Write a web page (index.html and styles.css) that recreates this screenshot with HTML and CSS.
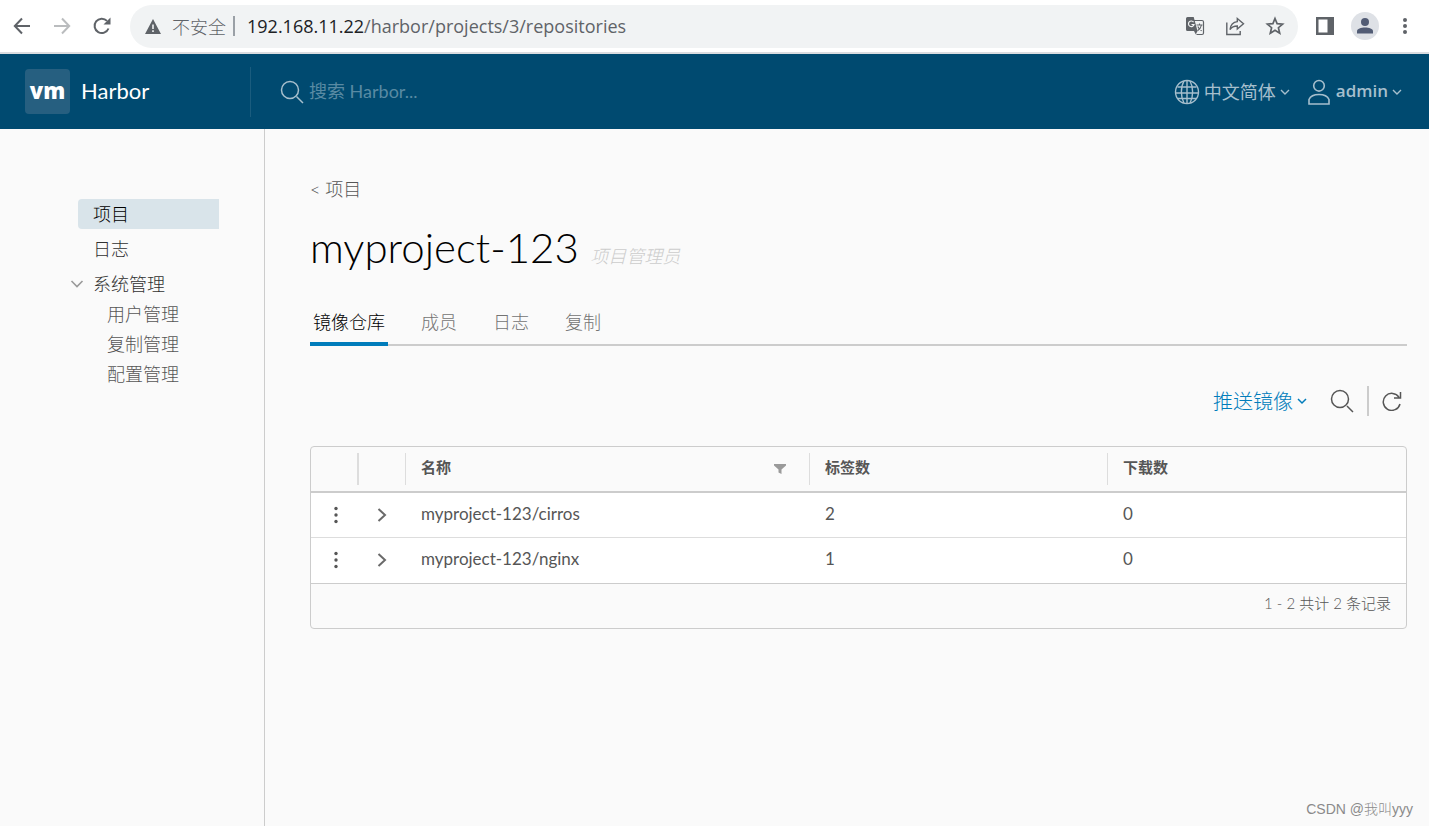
FILE: index.html
```html
<!DOCTYPE html>
<html lang="zh-CN">
<head>
<meta charset="utf-8">
<title>Harbor</title>
<link rel="stylesheet" href="styles.css">
</head>
<body>
<div class="browser-bar">
  <div class="nav-buttons">
    <button class="icon-btn" aria-label="后退"><svg width="20" height="20" viewBox="0 0 20 20" fill="none" stroke="#5f6368" stroke-width="2"><path d="M18 10H3M10 2.500L2.800 10l7.200 7.500"/></svg></button>
    <button class="icon-btn" aria-label="前进"><svg width="20" height="20" viewBox="0 0 20 20" fill="none" stroke="#babcbe" stroke-width="2"><path d="M2 10h15M10 2.500l7.200 7.500-7.200 7.500"/></svg></button>
    <button class="icon-btn" aria-label="重新加载"><svg width="20" height="20" viewBox="0 0 20 20"><path d="M16.500 12.500a7.200 7.200 0 1 1-1.500-7.600" fill="none" stroke="#5f6368" stroke-width="2"/><path d="M18.500 1.500v7h-7z" fill="#5f6368"/></svg></button>
  </div>
  <div class="address">
    <svg width="16" height="15" viewBox="0 0 16 15"><path d="M8 0l8 15H0z" fill="#5f6368"/><path d="M8 5.500v4.500M8 11.300v1.700" stroke="#f1f3f4" stroke-width="1.600"/></svg>
    <span class="insecure">不安全</span>
    <span class="address-sep"></span>
    <span class="url"><span class="url-host">192.168.11.22</span>/harbor/projects/3/repositories</span>
    <div class="address-actions">
      <button class="icon-btn" aria-label="翻译"><svg width="20" height="20" viewBox="0 0 20 20"><path d="M8.500 4.500H17a1.500 1.500 0 0 1 1.500 1.500v11a1.500 1.500 0 0 1-1.500 1.500h-5.500" fill="none" stroke="#5f6368" stroke-width="1.200"/><path d="M2.500 1h6.200l3.800 14H2.500A1.500 1.500 0 0 1 1 13.500v-11A1.500 1.500 0 0 1 2.500 1z" fill="#5f6368"/><path d="M9 15h3.500L10.800 18.500z" fill="#5f6368"/><path d="M8.600 6.200A2.800 2.800 0 1 0 9 8.500H6.500" fill="none" stroke="#f1f3f4" stroke-width="1.200"/><path d="M11.500 9h6M14.500 7.500V9M16.500 9c-.5 2.500-2 4.500-4 5.700M12.800 10.500c.8 1.800 2 3.200 3.900 4.400" fill="none" stroke="#5f6368" stroke-width="1.100"/></svg></button>
      <button class="icon-btn" aria-label="分享"><svg width="20" height="20" viewBox="0 0 20 20" fill="none" stroke="#5f6368" stroke-width="1.400"><path d="M1.800 6.500v12h13.400v-3.500"/><path d="M12.300 2.500l6.200 5.300-6.200 5.300V10c-3.300 0-5.600 1-7.300 3.600.5-4.300 3-7.500 7.300-8z"/></svg></button>
      <button class="icon-btn" aria-label="收藏"><svg width="20" height="20" viewBox="0 0 20 20" fill="none" stroke="#5f6368" stroke-width="1.700"><path d="M10 2.500l2.100 5.100 5.500.5-4.200 3.600 1.300 5.500L10 14.300l-4.700 2.900 1.300-5.500L2.400 8.100l5.500-.5z"/></svg></button>
    </div>
  </div>
  <div class="browser-actions">
    <button class="icon-btn" aria-label="侧边栏"><svg width="20" height="20" viewBox="0 0 20 20"><path d="M1 1h18v18H1z" fill="#5f6368"/><path d="M3.500 3.500h9v13h-9z" fill="#fff"/></svg></button>
    <button class="icon-btn avatar" aria-label="个人资料"><svg width="20" height="20" viewBox="0 0 20 20" fill="#525c75"><circle cx="10" cy="6" r="4"/><path d="M2 17.500v-2.300C2 12.800 6 11.500 10 11.500s8 1.300 8 3.700v2.300z"/></svg></button>
    <button class="icon-btn" aria-label="更多"><svg width="20" height="20" viewBox="0 0 20 20" fill="#5f6368"><circle cx="10" cy="4" r="2"/><circle cx="10" cy="10" r="2"/><circle cx="10" cy="16" r="2"/></svg></button>
  </div>
</div>

<header class="app-header">
  <a class="brand" href="#"><span class="logo">vm</span><span class="brand-name">Harbor</span></a>
  <label class="search">
    <svg width="24" height="24" viewBox="0 0 24 24" fill="none" stroke="#a6bfcd" stroke-width="1.500"><circle cx="10" cy="10" r="8.500"/><path d="M16.500 16.500l6.500 6.500"/></svg>
    <input type="text" placeholder="搜索 Harbor..." aria-label="搜索 Harbor">
  </label>
  <div class="header-actions">
    <button class="menu-btn"><svg width="26" height="26" viewBox="0 0 26 26" fill="none" stroke="#a6bfcd" stroke-width="1.400"><circle cx="13" cy="13" r="11.500"/><path d="M13 1.500v23M3.500 8h19M2 14h22M4 19.500h18M10 2C6.500 8 6.500 18 10 24M16 2c3.500 6 3.500 16 0 22"/></svg><span class="lang">中文简体</span><svg class="caret" width="10" height="8" viewBox="0 0 10 8" fill="none" stroke="#a6bfcd" stroke-width="1.400"><path d="M1 2l4 4 4-4"/></svg></button>
    <button class="menu-btn"><svg width="26" height="26" viewBox="0 0 26 26" fill="none" stroke="#a6bfcd" stroke-width="1.600"><circle cx="13" cy="6.800" r="5.300"/><path d="M3 25v-4.500C4.500 17 8.500 15.500 13 15.500s8.500 1.500 10 5V25z"/></svg><span class="user">admin</span><svg class="caret" width="10" height="8" viewBox="0 0 10 8" fill="none" stroke="#a6bfcd" stroke-width="1.400"><path d="M1 2l4 4 4-4"/></svg></button>
  </div>
</header>

<div class="workspace">
  <nav class="sidebar">
    <a class="nav-item active" href="#">项目</a>
    <a class="nav-item" href="#">日志</a>
    <div class="nav-group">
      <button class="group-toggle"><svg width="14" height="10" viewBox="0 0 14 10" fill="none" stroke="#9a9a9a" stroke-width="1.600"><path d="M1.500 2L7 7.500 12.500 2"/></svg><span>系统管理</span></button>
      <a class="nav-sub" href="#">用户管理</a>
      <a class="nav-sub" href="#">复制管理</a>
      <a class="nav-sub" href="#">配置管理</a>
    </div>
  </nav>
  <main class="content">
    <a class="back" href="#">&lt; 项目</a>
    <h1 class="title">myproject-123 <span class="role">项目管理员</span></h1>
    <div class="tabs" role="tablist">
      <button class="tab selected" role="tab" aria-selected="true">镜像仓库</button>
      <button class="tab" role="tab">成员</button>
      <button class="tab" role="tab">日志</button>
      <button class="tab" role="tab">复制</button>
    </div>
    <div class="toolbar">
      <button class="push">推送镜像<svg width="10" height="8" viewBox="0 0 10 8" fill="none" stroke="#007cbb" stroke-width="1.500"><path d="M1 2l4 4 4-4"/></svg></button>
      <button class="icon-btn" aria-label="搜索"><svg width="24" height="24" viewBox="0 0 24 24" fill="none" stroke="#565656" stroke-width="1.500"><circle cx="10" cy="10" r="8.500"/><path d="M17 17l6 6"/></svg></button>
      <span class="toolbar-sep"></span>
      <button class="icon-btn" aria-label="刷新"><svg width="20" height="20" viewBox="0 0 20 20" fill="none" stroke="#565656" stroke-width="1.500"><path d="M18 13a8.500 8.500 0 1 1-1-6.600M18.500 1v6H12"/></svg></button>
    </div>
    <div class="datagrid">
      <table>
        <colgroup><col class="col-menu"><col class="col-expand"><col class="col-name"><col class="col-tags"><col></colgroup>
        <thead>
          <tr>
            <th><div class="head"></div></th>
            <th><div class="head head-fixed"></div></th>
            <th><div class="head head-line">名称<button class="icon-btn filter" aria-label="过滤"><svg width="12" height="10" viewBox="0 0 12 10" fill="#9a9a9a"><path d="M0 0h12v1.500L7.500 5.500V10l-3-1.500v-3L0 1.500z"/></svg></button></div></th>
            <th><div class="head head-line">标签数</div></th>
            <th><div class="head head-line">下载数</div></th>
          </tr>
        </thead>
        <tbody>
          <tr>
            <td><button class="icon-btn row-menu" aria-label="操作"><svg width="6" height="18" viewBox="0 0 6 18" fill="#565656"><circle cx="3" cy="2.500" r="1.700"/><circle cx="3" cy="9" r="1.700"/><circle cx="3" cy="15.500" r="1.700"/></svg></button></td>
            <td><button class="icon-btn row-expand" aria-label="展开"><svg width="10" height="14" viewBox="0 0 10 14" fill="none" stroke="#6a6a6a" stroke-width="2"><path d="M1.500 1L8 7l-6.500 6"/></svg></button></td>
            <td>myproject-123/cirros</td><td>2</td><td>0</td>
          </tr>
          <tr>
            <td><button class="icon-btn row-menu" aria-label="操作"><svg width="6" height="18" viewBox="0 0 6 18" fill="#565656"><circle cx="3" cy="2.500" r="1.700"/><circle cx="3" cy="9" r="1.700"/><circle cx="3" cy="15.500" r="1.700"/></svg></button></td>
            <td><button class="icon-btn row-expand" aria-label="展开"><svg width="10" height="14" viewBox="0 0 10 14" fill="none" stroke="#6a6a6a" stroke-width="2"><path d="M1.500 1L8 7l-6.500 6"/></svg></button></td>
            <td>myproject-123/nginx</td><td>1</td><td>0</td>
          </tr>
        </tbody>
      </table>
      <div class="grid-footer">1 - 2 共计 2 条记录</div>
    </div>
    <div class="watermark">CSDN @我叫yyy</div>
  </main>
</div>
</body>
</html>
```

FILE: styles.css
```css
* { box-sizing: border-box; }
body {
  margin: 0;
  min-height: 100vh;
  display: flex;
  flex-direction: column;
  background: #fafafa;
  color: #565656;
  font-family: Lato, "Noto Sans CJK SC", sans-serif;
  font-size: 18px;
  font-weight: 300;
}
a { color: inherit; text-decoration: none; }
button { border: 0; padding: 0; background: none; font: inherit; color: inherit; }
svg { display: block; flex: none; }
.icon-btn { display: flex; align-items: center; justify-content: center; }

.browser-bar {
  display: flex;
  align-items: center;
  height: 54px;
  padding: 0 14px 0 12px;
  background: #fff;
  border-bottom: 2px solid #dadce0;
  font-family: "Open Sans", "Noto Sans CJK SC", sans-serif;
  font-weight: 400;
  color: #5f6368;
}
.nav-buttons { display: flex; gap: 20px; }
.address {
  flex: 1;
  display: flex;
  align-items: center;
  height: 43px;
  margin-left: 18px;
  padding: 0 13px 0 15px;
  border-radius: 22px;
  background: #f1f3f4;
}
.insecure { margin-left: 11px; font-weight: 300; }
.address-sep { width: 2px; height: 20px; margin: 0 12px 0 7px; background: #9aa0a6; }
.url-host { color: #202124; }
.address-actions { display: flex; gap: 20px; margin-left: auto; }
.browser-actions { display: flex; align-items: center; gap: 16px; margin-left: 17px; }
.avatar { width: 28px; height: 28px; border-radius: 50%; background: #dee1e6; }

.app-header {
  display: flex;
  align-items: center;
  height: 75px;
  padding: 0 27px 0 25px;
  background: #004a70;
  color: #a6bfcd;
}
.brand { display: flex; align-items: center; gap: 11px; width: 225px; color: #fff; font-weight: 400; }
.logo {
  display: flex;
  justify-content: center;
  width: 45px;
  height: 45px;
  border-radius: 4px;
  background: #265f80;
  font-family: "Open Sans", sans-serif;
  font-size: 22px;
  font-weight: 800;
  line-height: 42px;
}
.brand-name { padding-bottom: 2px; font-size: 22px; }
.search {
  flex: 1;
  display: flex;
  align-items: center;
  gap: 5px;
  height: 50px;
  padding-left: 29px;
  border-left: 1px solid #1a5c7e;
}
.search input { flex: 1; min-width: 0; border: 0; padding: 0 0 2px; background: none; color: #fff; font: inherit; font-weight: 400; }
.search input::placeholder { color: #598aa3; opacity: 1; }
.header-actions { display: flex; gap: 16px; }
.menu-btn { display: flex; align-items: center; gap: 4px; }
.user, .lang { padding-bottom: 2px; }
.user { font-family: "Open Sans", sans-serif; font-size: 17px; font-weight: 600; }
.lang { font-weight: 400; }

.workspace { flex: 1; display: flex; }
.sidebar {
  width: 265px;
  flex: none;
  padding: 70px 45px 0 70px;
  border-right: 1px solid #ccc;
  color: #313131;
}
.nav-item, .nav-sub { display: block; line-height: 30px; }
.nav-item { margin: 0 0 5px 8px; padding-left: 15px; border-radius: 4px 0 0 4px; }
.nav-item.active { background: #d9e4ea; color: #000; }
.group-toggle { display: flex; align-items: center; gap: 9px; line-height: 30px; }
.nav-sub { padding-left: 37px; color: #565656; }

.content { flex: 1; min-width: 0; display: flex; flex-direction: column; padding: 45px 22px 6px 45px; }
.back { line-height: 30px; }
.title { margin: 13px 0 0; font-size: 42px; font-weight: 300; line-height: 60px; color: #000; }
.role { font-size: 18px; font-style: italic; color: #ccc; }
.tabs { display: flex; gap: 30px; margin-top: 14px; border-bottom: 2px solid #ccc; }
.tab { height: 46px; margin-bottom: -2px; padding: 2px 3px 0; border-bottom: 4px solid transparent; color: #737373; line-height: 40px; }
.tab.selected { border-color: #007cbb; color: #000; }
.toolbar { display: flex; align-items: center; justify-content: flex-end; margin-top: 40px; padding-right: 5px; }
.push { display: flex; align-items: center; gap: 4px; margin-right: 23px; font-size: 20px; color: #007cbb; line-height: 30px; }
.toolbar-sep { width: 2px; height: 30px; margin: 0 13px; background: #ccc; }

.datagrid { margin-top: 30px; border: 1px solid #ccc; border-radius: 4px; }
table { width: 100%; border-collapse: collapse; table-layout: fixed; font-size: 17px; font-weight: 400; }
.col-menu { width: 46px; }
.col-expand { width: 48px; }
.col-name { width: 36.9%; }
.col-tags { width: 27.2%; }
th { padding: 6px 0; border-bottom: 2px solid #ccc; font-size: 15px; font-weight: 700; text-align: left; }
.head { display: flex; align-items: center; height: 32px; padding: 0 0 4px 15px; line-height: 22px; }
.head-fixed { border-left: 2px solid #ddd; }
.head-line { border-left: 1px solid #ddd; }
.filter { margin: 4px 23px 0 auto; }
tbody { background: #fff; }
td { height: 45px; padding: 0 16px 3px; border-bottom: 1px solid #ddd; }
tbody tr:last-child td { height: 46px; border-bottom-color: #ccc; }
td:nth-child(-n+2) { padding: 0 0 0 16px; }
.row-menu { margin-left: 6px; }
.row-expand { margin-left: 4px; }
.grid-footer { padding: 0 15px 6px; font-size: 15px; line-height: 38px; text-align: right; }
.watermark { margin: auto -6px 0 0; color: #8a8a8a; font-family: "Liberation Sans", "Noto Sans CJK SC", sans-serif; font-size: 14px; line-height: 22px; text-align: right; }
```
